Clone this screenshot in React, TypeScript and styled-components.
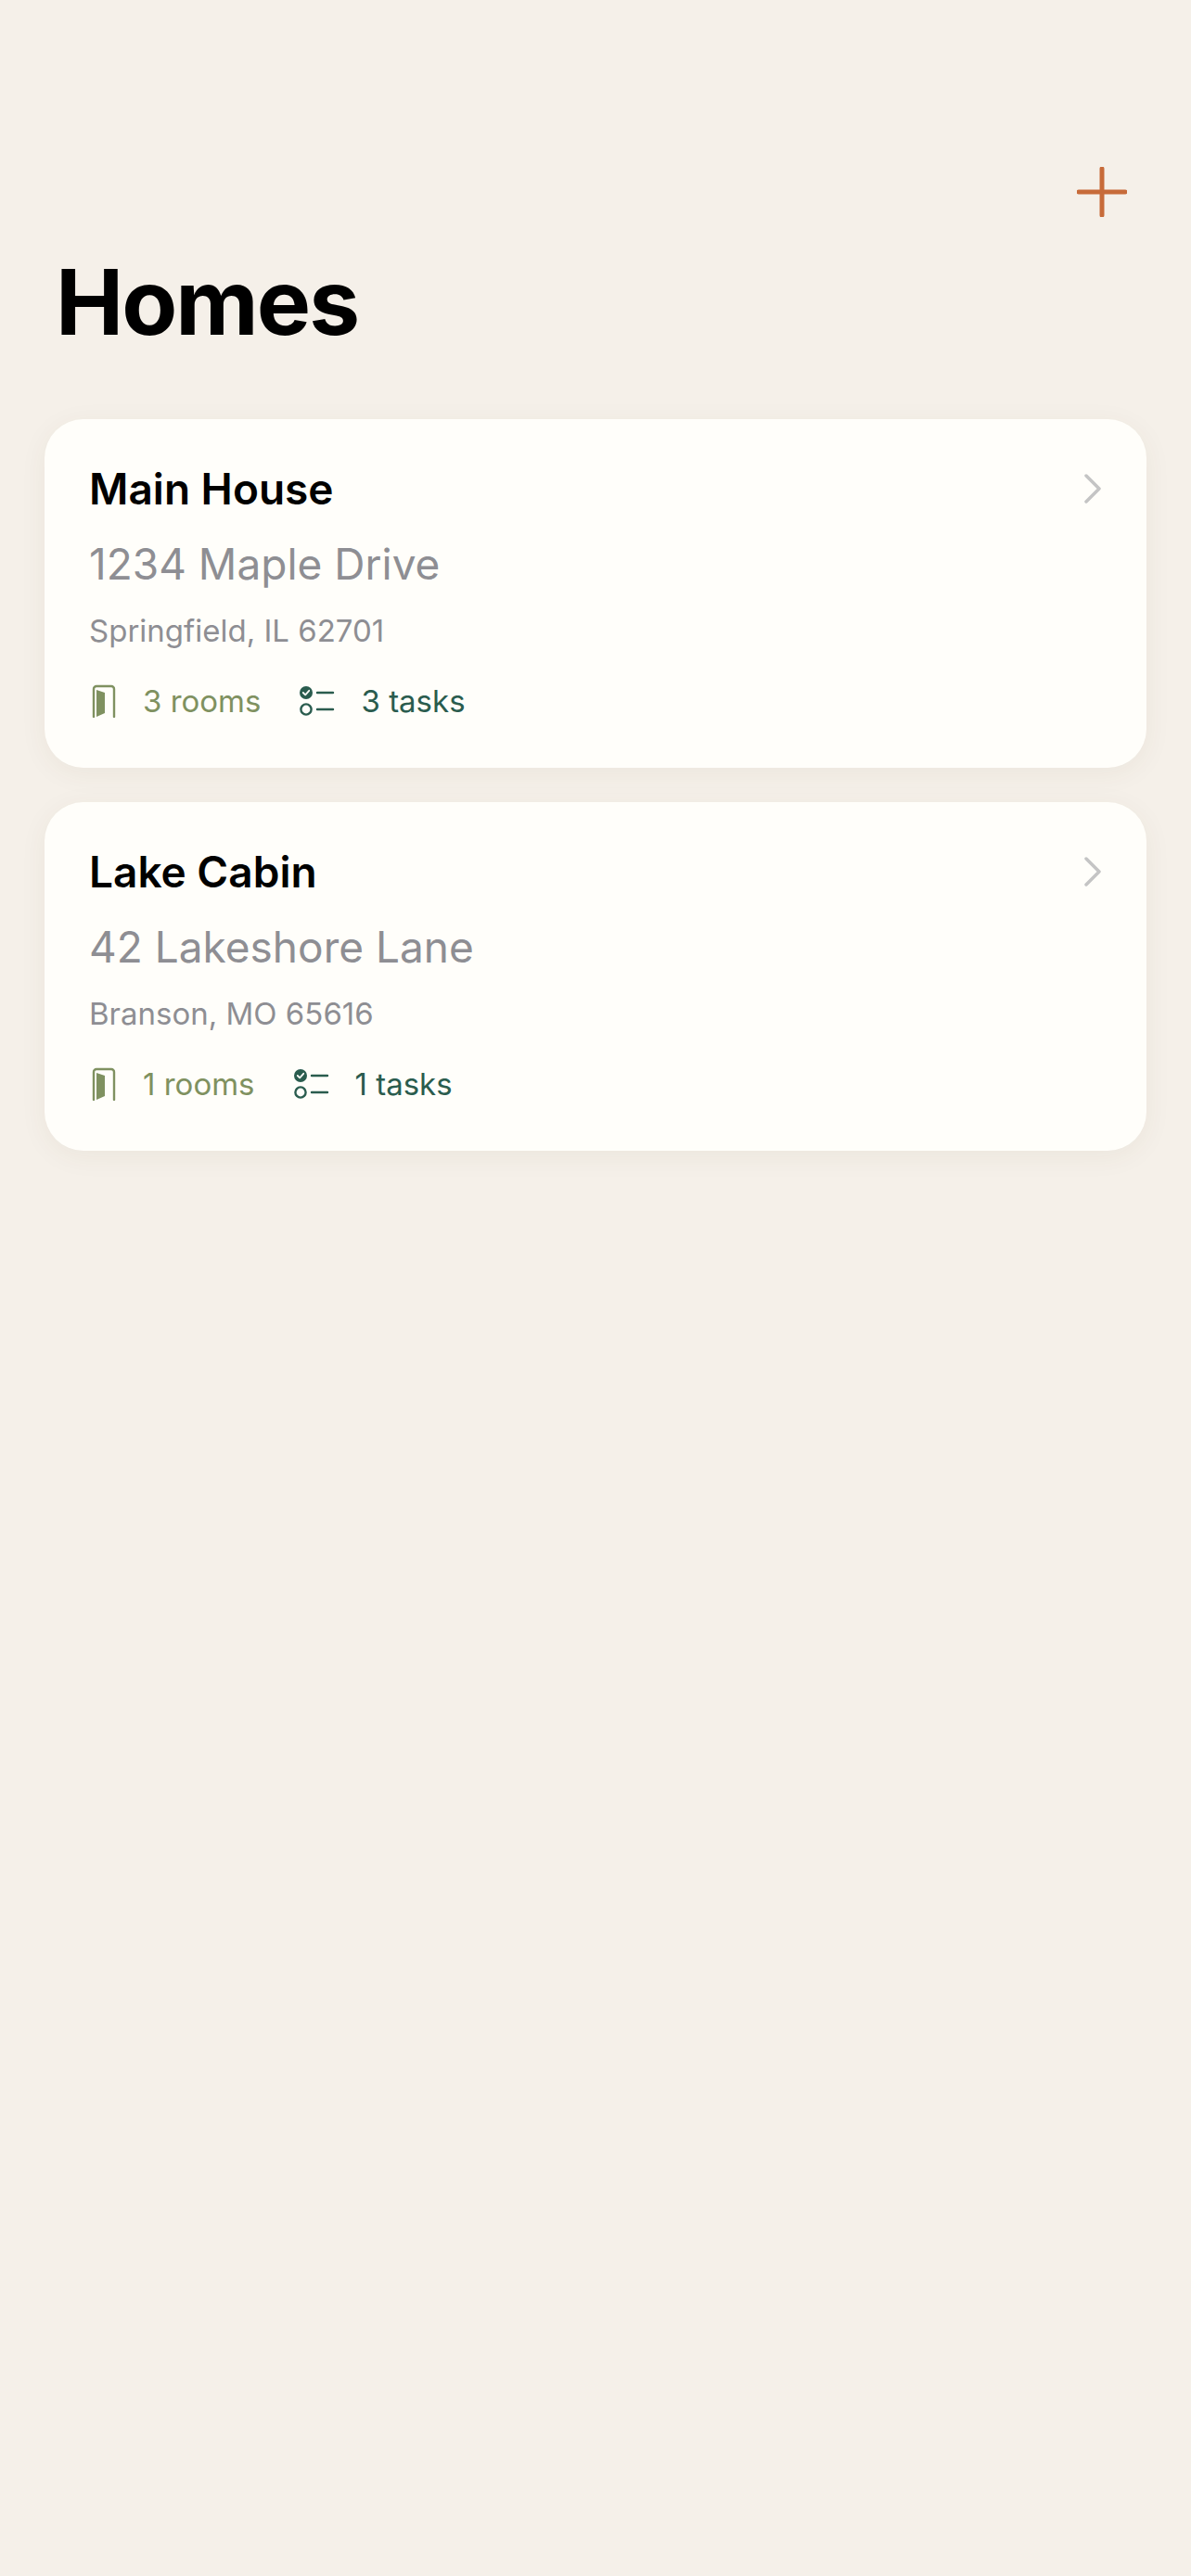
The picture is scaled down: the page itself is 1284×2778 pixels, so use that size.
import React from 'react';
import styled, { createGlobalStyle } from 'styled-components';

const GlobalStyle = createGlobalStyle`
  html, body {
    margin: 0;
    padding: 0;
    background: #f5f0e9;
  }
  body {
    font-family: Inter, "Liberation Sans", sans-serif;
  }
`;

const Page = styled.div`
  min-height: 2778px;
  box-sizing: border-box;
  padding: 171px 48px 0;
  background: #f5f0e9;
`;

const TopBar = styled.div`
  display: flex;
  justify-content: flex-end;
  padding-right: 18px;
  height: 72px;
`;

const AddButton = styled.button`
  width: 60px;
  height: 72px;
  padding: 0;
  border: 0;
  background: none;
  display: flex;
  align-items: center;
  justify-content: center;
`;

const Title = styled.h1`
  margin: 23px 0 66px 12px;
  font-size: 98px;
  line-height: 120px;
  font-weight: 700;
  letter-spacing: -2px;
  color: #000;
`;

const List = styled.div`
  display: flex;
  flex-direction: column;
  gap: 37px;
`;

const Card = styled.div`
  box-sizing: border-box;
  height: 376px;
  padding: 48px 48px 0;
  background: #fffefa;
  border-radius: 42px;
  box-shadow: 0 6px 30px rgba(80, 60, 40, 0.06);
`;

const CardHead = styled.div`
  display: flex;
  align-items: center;
  justify-content: space-between;
  height: 54px;
`;

const Name = styled.div`
  font-size: 46px;
  line-height: 54px;
  font-weight: 600;
  color: #000;
`;

const Street = styled.div`
  margin-top: 26px;
  font-size: 46px;
  line-height: 56px;
  color: #8e8e93;
`;

const City = styled.div`
  margin-top: 24px;
  font-size: 33px;
  line-height: 40px;
  color: #8e8e93;
`;

const Stats = styled.div`
  display: flex;
  align-items: center;
  gap: 42px;
  margin-top: 36px;
`;

const Stat = styled.div<{ $color: string }>`
  display: flex;
  align-items: center;
  gap: 28px;
  font-size: 33px;
  line-height: 40px;
  color: ${(p) => p.$color};
`;

const PlusIcon = () => (
  <svg width="54" height="54" viewBox="0 0 54 54" fill="none" stroke="#c76b3a" strokeWidth="5" strokeLinecap="round">
    <path d="M27 2v50M2 27h50" />
  </svg>
);

const Chevron = () => (
  <svg width="20" height="32" viewBox="0 0 20 32" fill="none" stroke="#c4c4c4" strokeWidth="3.5" strokeLinecap="round" strokeLinejoin="round">
    <path d="M3 2l14 14L3 30" />
  </svg>
);

const DoorIcon = () => (
  <svg width="30" height="36" viewBox="0 0 30 36" fill="none">
    <path d="M5 35V5a3 3 0 0 1 3-3h16a3 3 0 0 1 3 3v30" stroke="#7f9160" strokeWidth="2.4" strokeLinecap="round" />
    <path d="M8 6l9 3v22l-9 4z" fill="#7f9160" />
  </svg>
);

const TasksIcon = () => (
  <svg width="38" height="34" viewBox="0 0 38 34" fill="none">
    <circle cx="7" cy="8" r="7" fill="#2a5c4e" />
    <path d="M3.8 8l2.4 2.4 4-4.6" stroke="#fffefa" strokeWidth="1.8" strokeLinecap="round" strokeLinejoin="round" />
    <circle cx="7" cy="26" r="5.6" stroke="#2a5c4e" strokeWidth="2.4" />
    <path d="M19 8h17M19 26h17" stroke="#2a5c4e" strokeWidth="2.4" strokeLinecap="round" />
  </svg>
);

interface IHome {
  name: string;
  street: string;
  city: string;
  rooms: number;
  tasks: number;
}

const homes: IHome[] = [
  { name: 'Main House', street: '1234 Maple Drive', city: 'Springfield, IL 62701', rooms: 3, tasks: 3 },
  { name: 'Lake Cabin', street: '42 Lakeshore Lane', city: 'Branson, MO 65616', rooms: 1, tasks: 1 },
];

const App: React.FC = () => (
  <Page>
    <GlobalStyle />
    <TopBar>
      <AddButton>
        <PlusIcon />
      </AddButton>
    </TopBar>
    <Title>Homes</Title>
    <List>
      {homes.map((home) => (
        <Card key={home.name}>
          <CardHead>
            <Name>{home.name}</Name>
            <Chevron />
          </CardHead>
          <Street>{home.street}</Street>
          <City>{home.city}</City>
          <Stats>
            <Stat $color="#7f9160">
              <DoorIcon />
              {home.rooms} rooms
            </Stat>
            <Stat $color="#2a5c4e">
              <TasksIcon />
              {home.tasks} tasks
            </Stat>
          </Stats>
        </Card>
      ))}
    </List>
  </Page>
);

export default App;
